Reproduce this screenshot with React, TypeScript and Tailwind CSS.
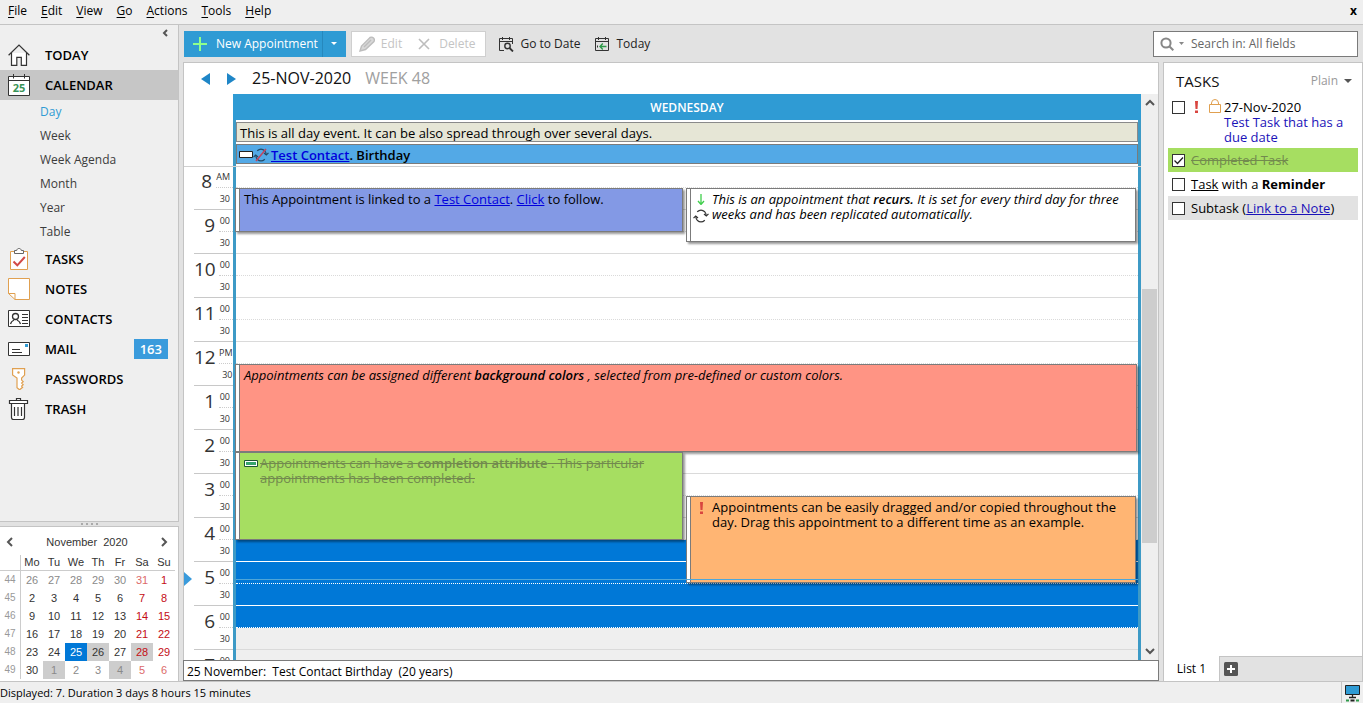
import { useState } from 'react';
import type { ReactNode } from 'react';
import { clsx } from 'clsx';

const MENU = ['File', 'Edit', 'View', 'Go', 'Actions', 'Tools', 'Help'];

const CALENDAR_VIEWS = ['Day', 'Week', 'Week Agenda', 'Month', 'Year', 'Table'];

const HOURS = [
  { hour: '8',  minutes: 'AM' },
  { hour: '9',  minutes: '00' },
  { hour: '10', minutes: '00' },
  { hour: '11', minutes: '00' },
  { hour: '12', minutes: 'PM' },
  { hour: '1',  minutes: '00' },
  { hour: '2',  minutes: '00' },
  { hour: '3',  minutes: '00' },
  { hour: '4',  minutes: '00' },
  { hour: '5',  minutes: '00' },
  { hour: '6',  minutes: '00' },
  { hour: '7',  minutes: '00' },
];

// half-hour slots counted from 8 AM
const SELECTED_FROM = 17;
const DAY_END = 21;

const WEEKDAYS = ['Mo', 'Tu', 'We', 'Th', 'Fr', 'Sa', 'Su'];

const WEEKS = [
  { no: 44, days: [26, 27, 28, 29, 30, 31, 1] },
  { no: 45, days: [2, 3, 4, 5, 6, 7, 8] },
  { no: 46, days: [9, 10, 11, 12, 13, 14, 15] },
  { no: 47, days: [16, 17, 18, 19, 20, 21, 22] },
  { no: 48, days: [23, 24, 25, 26, 27, 28, 29] },
  { no: 49, days: [30, 1, 2, 3, 4, 5, 6] },
];

const MARKED = ['48-26', '48-28', '49-1', '49-4'];

function HomeIcon() {
  return (
    <svg width="22" height="22" viewBox="0 0 22 22" fill="none" stroke="#333" strokeWidth="1.2">
      <path d="M3.5 9v12.4h5.3v-8h4.5v8h5.2V9" fill="#fff" />
      <path d="M.6 11.3 11 1l10.4 10.3" />
    </svg>
  );
}

function CalendarIcon() {
  return (
    <svg width="22" height="22" viewBox="0 0 22 22" fill="none" stroke="#333">
      <path d="M.5 2.5h21v19H.5z" fill="#fff" />
      <path d="M.5 6.5h21M5.5 0v4.5M16.5 0v4.5" />
      <text x="11" y="18" textAnchor="middle" fontSize="11" fontWeight="700" fill="#3a9458" stroke="none" fontFamily="Open Sans, sans-serif">25</text>
    </svg>
  );
}

function TasksIcon() {
  return (
    <svg width="22" height="22" viewBox="0 0 22 22" fill="none">
      <path d="M2.5 3.5h17v18h-17z" fill="#fff" stroke="#e0a050" />
      <path d="M6.5 5.5v-3h2.2C8.9-.2 13.1-.2 13.3 2.5h2.2v3z" fill="#fff" stroke="#666" />
      <path d="m5.5 13.5 3.8 3.8 7.5-8.3" stroke="#d24a48" strokeWidth="2" />
    </svg>
  );
}

function NotesIcon() {
  return (
    <svg width="22" height="22" viewBox="0 0 22 22" fill="none" stroke="#e0a050">
      <path d="M.5.5h21v21H7l-6.5-6z" fill="#fff" />
      <path d="M.5 15.5H7v6" />
    </svg>
  );
}

function ContactsIcon() {
  return (
    <svg width="22" height="22" viewBox="0 0 22 22" fill="none" stroke="#333">
      <path d="M.5 2.5h21v16H.5z" fill="#fff" />
      <circle cx="7.5" cy="8.5" r="3" strokeWidth="1.3" />
      <path d="M2.5 16c.5-2.5 1.5-3 3.5-4M12.5 16c-.5-2.5-1.5-3-3.500-4" strokeWidth="1.3" />
      <path d="M14 6.5h6M14 9.5h6M14 12.5h6M14 15.5h6" />
    </svg>
  );
}

function MailIcon() {
  return (
    <svg width="22" height="22" viewBox="0 0 22 22" fill="none" stroke="#333">
      <path d="M.5 4.5h21v13H.5z" fill="#fff" />
      <path d="M4 11.5h8M4 14.5h10" />
      <path d="M17 6h3v3h-3z" fill="#2f9bd4" stroke="none" />
    </svg>
  );
}

function KeyIcon() {
  return (
    <svg width="22" height="22" viewBox="0 0 22 22" fill="none" stroke="#e0a050" strokeWidth="1.2">
      <path d="M4.6.6h12v6.5l-3 3v2l1.6 1.6-1.6 1.4 1.6 1.6-1.6 1.4 1 1.2-3 2.5-2.6-2V10l-4.400-3z" fill="#fff" />
      <circle cx="10.5" cy="4.5" r="1.2" fill="#e0a050" stroke="none" />
    </svg>
  );
}

function TrashIcon() {
  return (
    <svg width="22" height="22" viewBox="0 0 22 22" fill="none" stroke="#333" strokeWidth="1.2">
      <path d="M3.5 5.5v14q0 2 2 2h9q2 0 2-2v-14" fill="#fff" />
      <path d="M1.5 2.5h18v3h-18z" fill="#fff" />
      <path d="M8.5 2.5v-2h4v2M6.5 9v9M10 9v9M13.5 9v9" />
    </svg>
  );
}

function RecurIcon({ color = '#333' }: { color?: string }) {
  return (
    <svg width="16" height="14" viewBox="0 0 16 14" fill="none" stroke={color} strokeWidth="1.2" className="shrink-0">
      <path d="M4.2 2.8Q8-.6 11.8 2.8 13 4 13.2 6.5M11.8 11.2Q8 14.6 4.2 11.2 3 10 2.8 7.5" />
      <path d="m11 5 2.3 2 2.2-2.2M.5 9.2 2.7 7 5 9" />
    </svg>
  );
}

function Exclamation() {
  return (
    <svg width="5" height="12" viewBox="0 0 5 12" fill="#d9453f">
      <path d="M1 0h3l-.5 8h-2zM1 9.5h3V12H1z" />
    </svg>
  );
}

function Chevron({ d }: { d: string }) {
  return (
    <svg width="10" height="10" viewBox="0 0 10 10" fill="none" stroke="#555" strokeWidth="2">
      <path d={d} />
    </svg>
  );
}

function NavItem({ icon, label, active, badge }: { icon: ReactNode; label: string; active?: boolean; badge?: number }) {
  return (
    <a href="#" className={clsx('flex h-[30px] items-center pl-2 pr-[10px] text-[13px] font-semibold text-black', active && 'bg-[#c6c6c6]')}>
      {icon}
      <span className="ml-[15px] flex-1 pt-[2px]">{label}</span>
      {badge && <span className="bg-[#3a9bdc] px-[6px] text-[13px] leading-[20px] text-white">{badge}</span>}
    </a>
  );
}

function MiniCalendar() {
  return (
    <div className="h-[154px] bg-white font-['Liberation_Sans',sans-serif] text-[#333]">
      <div className="flex h-7 items-center justify-between px-[5px] pt-[2px] text-[11px]">
        <button type="button" aria-label="Previous month"><Chevron d="M7 1 3 5l4 4" /></button>
        <span className="whitespace-pre">November  2020</span>
        <button type="button" aria-label="Next month" className="mr-1"><Chevron d="m3 1 4 4-4 4" /></button>
      </div>
      <table className="table-fixed border-separate border-spacing-0 text-center text-[11px]">
        <thead>
          <tr className="h-4">
            <th className="w-[21px] border-b border-r border-[#ccc] p-0" />
            {WEEKDAYS.map((d) => (
              <th key={d} className="w-[22px] border-b border-[#ccc] p-0 font-normal leading-[15px]">{d}</th>
            ))}
          </tr>
        </thead>
        <tbody>
          {WEEKS.map((w) => (
            <tr key={w.no} className="h-[18px]">
              <td className="border-r border-[#ccc] p-0 text-[10px] leading-[18px] text-[#999]">{w.no}</td>
              {w.days.map((d, i) => {
                const outside = (w.no === 44 && d > 20) || (w.no === 49 && d < 20);
                const selected = w.no === 48 && d === 25;
                const weekend = i > 4;
                return (
                  <td
                    key={d}
                    className={clsx(
                      'p-0 leading-[18px]',
                      selected && 'bg-[#0078d7] text-white',
                      MARKED.includes(`${w.no}-${d}`) && 'bg-[#cdcdcd]',
                      weekend && (outside ? 'text-[#dc6a6a]' : 'text-[#c40d14]'),
                      !weekend && outside && 'text-[#8a8a8a]'
                    )}
                  >
                    {d}
                  </td>
                );
              })}
            </tr>
          ))}
        </tbody>
      </table>
    </div>
  );
}

function Sidebar() {
  return (
    <aside className="mr-1 flex w-[179px] shrink-0 flex-col bg-[#efefef]">
      <nav className="flex-1 border-r border-[#c4c4c4]">
        <div className="flex h-[15px] items-center justify-end pr-2">
          <button type="button" aria-label="Collapse"><Chevron d="M7 2 4 5l3 3" /></button>
        </div>
        <NavItem icon={<HomeIcon />} label="TODAY" />
        <NavItem icon={<CalendarIcon />} label="CALENDAR" active />
        {CALENDAR_VIEWS.map((v) => (
          <a key={v} href="#" className={clsx('block pl-10 text-[12px] leading-[24px]', v === 'Day' ? 'text-[#2f9bd4]' : 'text-[#3c3c3c]')}>
            {v}
          </a>
        ))}
        <NavItem icon={<TasksIcon />} label="TASKS" />
        <NavItem icon={<NotesIcon />} label="NOTES" />
        <NavItem icon={<ContactsIcon />} label="CONTACTS" />
        <NavItem icon={<MailIcon />} label="MAIL" badge={163} />
        <NavItem icon={<KeyIcon />} label="PASSWORDS" />
        <NavItem icon={<TrashIcon />} label="TRASH" />
      </nav>
      <div className="flex h-[6px] items-center justify-center gap-[3px] border-y border-[#c4c4c4] bg-[#e2e2e2]">
        {[0, 1, 2, 3].map((i) => <span key={i} className="size-[2px] bg-[#aaa]" />)}
      </div>
      <div className="border-r border-[#c4c4c4]">
        <MiniCalendar />
      </div>
    </aside>
  );
}

function Toolbar() {
  return (
    <div className="flex h-[37px] shrink-0 items-center pr-[5px] text-[12px]">
      <div className="ml-px flex h-[26px] bg-[#2f9bd4] text-white">
        <button type="button" className="flex items-center pl-[9px] pr-1">
          <svg width="14" height="14" viewBox="0 0 14 14" stroke="#8dff8d" strokeWidth="2"><path d="M7 0v14M0 7h14" /></svg>
          <span className="ml-[9px]">New Appointment</span>
        </button>
        <button type="button" aria-label="More" className="flex w-6 items-center justify-center border-l border-[#2688bd]">
          <svg width="6" height="3" viewBox="0 0 6 3" fill="#fff"><path d="M0 0h6L3 3z" /></svg>
        </button>
      </div>
      <div className="ml-[5px] flex h-[26px] items-center border border-[#cfcfcf] bg-white px-[7px] text-[#c4c4c4]">
        <button type="button" disabled className="flex items-center gap-[6px]">
          <svg width="16" height="16" viewBox="0 0 16 16" fill="none" stroke="#bdbdbd" strokeWidth="1.4">
            <path d="m1 15 1.5-5L11 1.5q2-1 3.5.5t.5 3.5L6.5 13.5z" fill="#d8d8d8" />
            <path d="m5 11 7-7" />
          </svg>
          Edit
        </button>
        <button type="button" disabled className="ml-4 flex items-center gap-[9px] pr-[3px]">
          <svg width="12" height="12" viewBox="0 0 12 12" stroke="#bdbdbd" strokeWidth="1.6"><path d="m1 1 10 10M11 1 1 11" /></svg>
          Delete
        </button>
      </div>
      <button type="button" className="ml-3 flex items-center gap-[6px] text-[#222]">
        <svg width="16" height="16" viewBox="0 0 16 16" fill="none" stroke="#333">
          <path d="M6 14.5H1.5v-12h13V8M1.5 5.5h13M4.5 1v3M11.5 1v3" />
          <circle cx="9.5" cy="10" r="2.7" strokeWidth="1.4" />
          <path d="m11.5 12 3.5 3.5" strokeWidth="1.8" />
        </svg>
        Go to Date
      </button>
      <button type="button" className="ml-[14px] flex items-center gap-[6px] text-[#222]">
        <svg width="16" height="16" viewBox="0 0 16 16" fill="none" stroke="#333">
          <path d="M1.5 2.5h13v12h-13zM1.5 5.5h13M4.5 1v3M11.5 1v3" />
          <path d="M6 10.5h6.5M8.8 7.5 6 10.5l2.8 3" stroke="#2f9a4a" strokeWidth="1.4" />
          <path d="M3.5 9.5v2" />
        </svg>
        Today
      </button>
      <label className="ml-auto flex h-[26px] w-[205px] items-center border border-[#7a7a7a] bg-white pl-[6px]">
        <svg width="24" height="14" viewBox="0 0 24 14" fill="none" stroke="#888" strokeWidth="2">
          <circle cx="6" cy="6" r="4.6" />
          <path d="m9.3 9.3 4 4" />
          <path d="M19 5h5l-2.5 3z" fill="#888" stroke="none" />
        </svg>
        <input type="text" aria-label="Search" placeholder="Search in: All fields" className="ml-[7px] min-w-0 flex-1 outline-none placeholder:text-[#666]" />
      </label>
    </div>
  );
}

function Appointment({ className, color, icons, children }: { className: string; color: string; icons?: ReactNode; children: ReactNode }) {
  return (
    <div className={clsx('absolute flex border border-[#7b7b7b] bg-white pl-[3px] text-[13px] leading-[15px] shadow-[2px_2px_2px_rgba(0,0,0,0.4)]', className)}>
      <div className={clsx('flex flex-1 border-l border-[#7b7b7b] pl-1 pt-[3px]', color)}>
        {icons}
        <p className="flex-1">{children}</p>
      </div>
    </div>
  );
}

function TimeGutter() {
  return (
    <div className="relative w-[49px] shrink-0 pl-[10px] text-[#333]">
      {HOURS.map((h) => (
        <div key={h.hour} className="flex h-[44px] border-b border-[#c8c8c8]">
          <div className="w-[21px] text-right text-[19px] leading-[30px]">{h.hour}</div>
          <div className="ml-1 flex-1 text-[9px]">
            <div className="flex h-[22px] items-center justify-end border-b border-dotted border-[#ccc] pr-[3px]">{h.minutes}</div>
            <div className="flex h-[21px] items-center justify-end pr-[3px]">30</div>
          </div>
        </div>
      ))}
      <svg width="8" height="14" viewBox="0 0 8 14" fill="#3a9bdc" className="absolute left-0 top-[406px]"><path d="m0 0 8 7-8 7z" /></svg>
    </div>
  );
}

function DayColumn() {
  return (
    <div className="relative flex-1 border-x-[3px] border-[#3d9ac6]">
      {HOURS.flatMap((h, i) =>
        [0, 1].map((half) => {
          const slot = i * 2 + half;
          const selected = slot >= SELECTED_FROM && slot < DAY_END;
          return (
            <div
              key={`${h.hour}-${half}`}
              className={clsx(
                'h-[22px] border-b',
                half === 0 && 'border-dotted',
                selected ? 'border-white bg-[#0078d7]' : 'border-[#dadada]',
                slot >= DAY_END && 'bg-[#efefef]'
              )}
            />
          );
        })
      )}

      <Appointment className="-left-px right-1/2 top-[22px] mr-1 h-[44px]" color="bg-[#8399e5]">
        This Appointment is linked to a <a href="#" className="text-[#0000dd] underline">Test Contact</a>. <a href="#" className="text-[#0000dd] underline">Click</a> to follow.
      </Appointment>

      <Appointment
        className="left-1/2 right-[2px] top-[22px] -ml-px h-[54px]"
        color="bg-white"
        icons={
          <span className="mr-[5px] flex w-3 flex-col items-center gap-1 pt-[2px]">
            <svg width="8" height="11" viewBox="0 0 8 11" fill="none" stroke="#3fce4b" strokeWidth="1.3"><path d="M4 0v10M1 7l3 3.500L7 7" /></svg>
            <RecurIcon />
          </span>
        }
      >
        <em>This is an appointment that <strong className="font-semibold">recurs.</strong> It is set for every third day for three weeks and has been replicated automatically.</em>
      </Appointment>

      <Appointment className="-left-px right-[1px] top-[198px] h-[88px]" color="bg-[#ff9484]">
        <em>Appointments can be assigned different <strong className="font-semibold">background colors</strong> , selected from pre-defined or custom colors.</em>
      </Appointment>

      <Appointment
        className="-left-px right-1/2 top-[286px] mr-1 h-[88px]"
        color="bg-[#a6de61]"
        icons={
          <svg width="14" height="8" viewBox="0 0 14 8" className="mr-[2px] mt-1 shrink-0" stroke="#1c5632" fill="#fff"><path d="M.5.5h13v6H.5z" /><path d="M2 3.5h10" stroke="#35a56b" strokeWidth="3" /></svg>
        }
      >
        <s className="text-[#728a4e]">Appointments can have a <strong className="font-semibold">completion attribute</strong> . This particular appointments has been completed.</s>
      </Appointment>

      <Appointment
        className="left-1/2 right-[2px] top-[330px] -ml-px h-[87px]"
        color="bg-[#ffb573]"
        icons={<span className="mr-[5px] flex w-3 justify-center pt-[2px]"><Exclamation /></span>}
      >
        Appointments can be easily dragged and/or copied throughout the day. Drag this appointment to a different time as an example.
      </Appointment>

      {/* current time */}
      <div className="absolute inset-x-0 top-[413px] h-px bg-[#4fa6d8]" />
    </div>
  );
}

function DayView() {
  return (
    <section className="flex min-w-0 flex-1 flex-col border border-[#c4c4c4] bg-white">
      <div className="flex h-[31px] items-center pl-[17px]">
        <button type="button" aria-label="Previous day">
          <svg width="9" height="12" viewBox="0 0 9 12" fill="#1f86c7"><path d="M9 0v12L0 6z" /></svg>
        </button>
        <button type="button" aria-label="Next day" className="ml-[17px]">
          <svg width="9" height="12" viewBox="0 0 9 12" fill="#1f86c7"><path d="M0 0v12l9-6z" /></svg>
        </button>
        <h1 className="ml-4 pb-[2px] text-[16px] text-[#111]">25-NOV-2020</h1>
        <span className="ml-[14px] pb-[2px] text-[16px] text-[#a0a0a0]">WEEK 48</span>
      </div>

      <div className="flex min-h-0 flex-1">
        <div className="flex min-w-0 flex-1 flex-col">
          <div className="ml-[49px]">
            <div className="bg-[#2f9bd4] pt-[2px] text-center text-[12px] font-semibold leading-[24px] text-white">WEDNESDAY</div>
            <div className="flex flex-col gap-[2px] border-x-[3px] border-[#3d9ac6] py-[2px] text-[13px] leading-[16px]">
              <div className="border border-[#8a8a8a] bg-[#e6e6d6] pl-[3px] pt-[2px]">This is all day event. It can be also spread through over several days.</div>
              <div className="flex items-center border border-[#7b7b7b] bg-[#53a9e6] pl-[2px] pt-[2px] font-semibold">
                <svg width="14" height="8" viewBox="0 0 14 8" fill="#fff" stroke="#222"><path d="M.5.5h13v6H.5z" /></svg>
                <span className="relative mr-[2px]">
                  <RecurIcon color="#234a66" />
                  <svg width="16" height="14" viewBox="0 0 16 14" stroke="#c2455f" strokeWidth="1.5" className="absolute inset-0"><path d="M3 13 13 1" /></svg>
                </span>
                <a href="#" className="text-[#0000dd] underline">Test Contact</a>. Birthday
              </div>
            </div>
          </div>
          <div className="min-h-0 flex-1 overflow-hidden border-t border-[#d0d0d0]">
            <div className="-mt-px flex">
              <TimeGutter />
              <DayColumn />
            </div>
          </div>
        </div>
        <div className="flex w-[17px] flex-col items-center bg-[#efefef]">
          <button type="button" aria-label="Scroll up" className="flex h-[18px] items-center"><Chevron d="M1 7l4-4 4 4" /></button>
          <div className="flex w-full flex-1 flex-col pl-px pr-px">
            <div className="flex-[177]" />
            <div className="flex-[254] bg-[#cdcdcd]" />
            <div className="flex-[99]" />
          </div>
          <button type="button" aria-label="Scroll down" className="flex h-[18px] items-center"><Chevron d="M1 3l4 4 4-4" /></button>
        </div>
      </div>

      <div className="-mx-px -mb-px whitespace-pre border border-[#7b7b7b] pl-[3px] pt-[2px] text-[12px] leading-[17px]">25 November:  Test Contact Birthday  (20 years)</div>
    </section>
  );
}

function TaskRow({ name, done, className, children }: { name: string; done?: boolean; className?: string; children: ReactNode }) {
  const [checked, setChecked] = useState(!!done);
  return (
    <li className={clsx('flex pl-1 pt-1 text-[13px] leading-[15px]', className)}>
      <span className="relative mt-[2px] size-[13px] shrink-0">
        <input
          type="checkbox"
          aria-label={name}
          checked={checked}
          onChange={(e) => setChecked(e.target.checked)}
          className="block size-[13px] appearance-none border border-[#333] bg-white"
        />
        {checked && (
          <svg width="13" height="13" viewBox="0 0 13 13" fill="none" stroke="#222" strokeWidth="1.3" className="pointer-events-none absolute inset-0"><path d="m2.5 6.5 3 3 5.5-6" /></svg>
        )}
      </span>
      {children}
    </li>
  );
}

function TaskPanel() {
  return (
    <section className="ml-1 flex w-[200px] shrink-0 flex-col border border-b-0 border-[#c4c4c4] bg-white">
      <div className="flex h-8 items-center justify-between pl-3 pr-[10px] pt-1">
        <h2 className="text-[15px] text-[#111]">TASKS</h2>
        <button type="button" className="flex items-center gap-[6px] text-[12px] text-[#999]">
          Plain
          <svg width="8" height="4" viewBox="0 0 8 4" fill="#555"><path d="M0 0h8L4 4z" /></svg>
        </button>
      </div>
      <ul className="flex-1 px-1">
        <TaskRow name="Test Task" className="h-[53px]">
          <span className="ml-[9px] mt-[2px]"><Exclamation /></span>
          <svg width="12" height="15" viewBox="0 0 12 15" fill="none" stroke="#e0a050" className="ml-[10px] shrink-0">
            <path d="M.5 5.5h11v8H.5zM2.5 5.5V4Q2.7.5 6 .5T9.5 4v1.5" />
          </svg>
          <p className="ml-[3px] pt-px">27-Nov-2020<br /><span className="text-[#1a12b8]">Test Task that has a due date</span></p>
        </TaskRow>
        <TaskRow name="Completed Task" done className="h-6 bg-[#a6de61]">
          <s className="ml-[6px] pt-px text-[#728a4e]">Completed Task</s>
        </TaskRow>
        <TaskRow name="Task with a Reminder" className="h-6">
          <p className="ml-[6px] pt-px"><u>Task</u> with a <b>Reminder</b></p>
        </TaskRow>
        <TaskRow name="Subtask" className="h-6 bg-[#e2e2e2]">
          <p className="ml-[6px] pt-px">Subtask (<a href="#" className="text-[#1a12b8] underline">Link to a Note</a>)</p>
        </TaskRow>
      </ul>
      <div className="flex h-[25px] text-[12px]">
        <button type="button" className="w-[55px] text-center">List 1</button>
        <div className="flex flex-1 items-center border-l border-t border-[#c4c4c4] bg-[#e2e2e2] pl-1">
          <button type="button" aria-label="Add list">
            <svg width="14" height="14" viewBox="0 0 14 14" className="block"><rect width="14" height="14" rx="1.5" fill="#555" /><path d="M7 3v8M3 7h8" stroke="#fff" strokeWidth="2" /></svg>
          </button>
        </div>
      </div>
    </section>
  );
}

export default function App() {
  return (
    <div className="flex h-screen flex-col overflow-hidden bg-[#e2e2e2] font-['Open_Sans','Noto_Sans',sans-serif] text-[12px] text-black">
      <header className="flex h-[25px] shrink-0 items-center border-b border-[#c4c4c4] bg-[#efefef] pb-[2px] pl-px">
        {MENU.map((m) => (
          <button key={m} type="button" className="px-[7px] leading-[22px]">
            <u className="underline-offset-2">{m[0]}</u>{m.slice(1)}
          </button>
        ))}
        <button type="button" aria-label="Close" className="ml-auto pr-[6px] font-bold">x</button>
      </header>

      <div className="flex min-h-0 flex-1">
        <Sidebar />
        <main className="flex min-w-0 flex-1 flex-col">
          <Toolbar />
          <div className="flex min-h-0 flex-1">
            <DayView />
            <TaskPanel />
          </div>
        </main>
      </div>

      <footer className="flex h-[22px] shrink-0 justify-between border-t border-[#c4c4c4] bg-[#efefef] text-[11px] leading-[22px]">
        <span>Displayed: 7. Duration 3 days 8 hours 15 minutes</span>
        <span className="flex items-center border-l border-[#c4c4c4] px-[3px]">
          <svg width="15" height="18" viewBox="0 0 15 18" fill="none">
            <path d="M.5 1.5h14v9H.5z" fill="#2f9bd4" stroke="#222" />
            <path d="M7.5 10.5v3M4 13.5h7" stroke="#222" strokeWidth="1.3" />
            <path d="M1 16.5h3M11 16.5h3" stroke="#2f9a4a" strokeWidth="2" />
            <path d="M5.5 16.5h4" stroke="#222" strokeWidth="2" />
          </svg>
        </span>
      </footer>
    </div>
  );
}
